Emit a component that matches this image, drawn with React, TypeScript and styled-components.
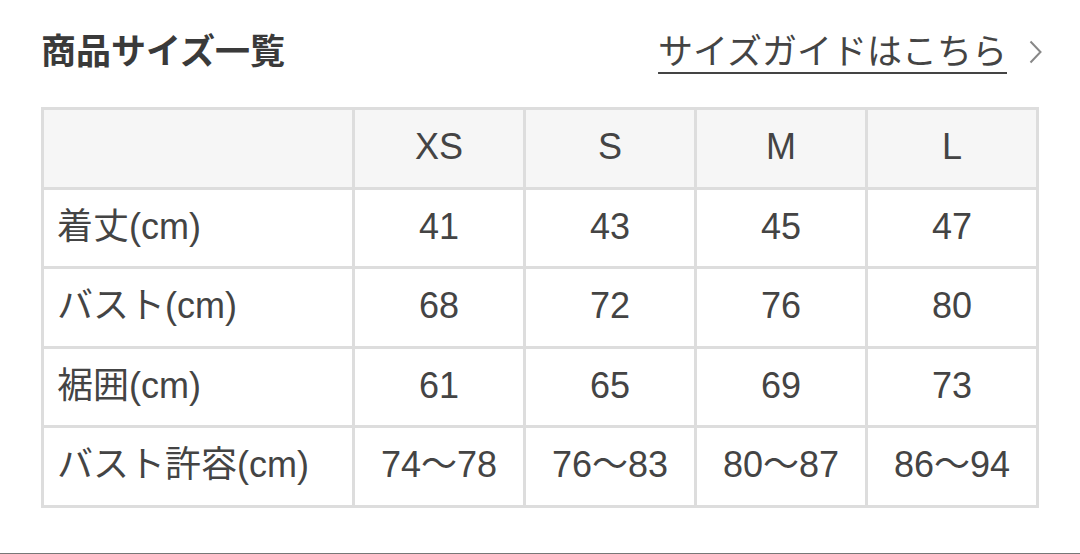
import React from "react";
import styled, { createGlobalStyle } from "styled-components";

const GlobalStyle = createGlobalStyle`
  html, body {
    margin: 0;
    padding: 0;
    background: #fff;
  }
  body {
    font-family: "Liberation Sans", "Noto Sans CJK JP", sans-serif;
    color: #444;
  }
`;

const Page = styled.div`
  width: 1080px;
  height: 554px;
  box-sizing: border-box;
  padding: 31px 41px 0;
  border-bottom: 1px solid #777;
  overflow: hidden;
`;

const Head = styled.div`
  display: flex;
  align-items: center;
  justify-content: space-between;
  height: 42px;
  margin-bottom: 34px;
`;

const Title = styled.h2`
  margin: 0;
  font-size: 35px;
  font-weight: 700;
  color: #3a3a3a;
  line-height: 42px;
`;

const GuideLink = styled.a`
  display: flex;
  align-items: center;
  gap: 22px;
  margin-right: -3px;
  color: #444;
  font-size: 35px;
  line-height: 42px;
  text-decoration: none;
  span {
    text-decoration: underline;
    text-underline-offset: 8px;
    text-decoration-thickness: 2px;
  }
`;

const Table = styled.table`
  width: 998px;
  border-collapse: collapse;
  table-layout: fixed;
  border: 3px solid #ddd;
`;

const Cell = styled.td<{ $head?: boolean; $label?: boolean }>`
  border: 3px solid #ddd;
  height: 74.5px;
  padding: 0 ${(p) => (p.$label ? "13px" : "0")} 2px;
  font-size: 36px;
  line-height: 1;
  font-weight: 400;
  color: #444;
  vertical-align: middle;
  text-align: ${(p) => (p.$label ? "left" : "center")};
  background: ${(p) => (p.$head ? "#f6f6f6" : "#fff")};
  white-space: nowrap;
`;

const sizes = ["XS", "S", "M", "L"];
const rows: [string, string[]][] = [
  ["着丈(cm)", ["41", "43", "45", "47"]],
  ["バスト(cm)", ["68", "72", "76", "80"]],
  ["裾囲(cm)", ["61", "65", "69", "73"]],
  ["バスト許容(cm)", ["74〜78", "76〜83", "80〜87", "86〜94"]],
];

const Chevron = () => (
  <svg width="13" height="24" viewBox="0 0 13 24" fill="none">
    <path d="M1.5 1.5l10 10.5-10 10.5" stroke="#888" strokeWidth="2" />
  </svg>
);

export default function App() {
  return (
    <>
      <GlobalStyle />
      <Page>
        <Head>
          <Title>商品サイズ一覧</Title>
          <GuideLink href="#">
            <span>サイズガイドはこちら</span>
            <Chevron />
          </GuideLink>
        </Head>
        <Table>
          <colgroup>
            <col style={{ width: 311 }} />
            <col />
            <col />
            <col />
            <col />
          </colgroup>
          <thead>
            <tr>
              <Cell as="th" $head $label />
              {sizes.map((s) => (
                <Cell as="th" $head key={s}>
                  {s}
                </Cell>
              ))}
            </tr>
          </thead>
          <tbody>
            {rows.map(([label, vals]) => (
              <tr key={label}>
                <Cell $label>{label}</Cell>
                {vals.map((v, i) => (
                  <Cell key={i}>{v}</Cell>
                ))}
              </tr>
            ))}
          </tbody>
        </Table>
      </Page>
    </>
  );
}
